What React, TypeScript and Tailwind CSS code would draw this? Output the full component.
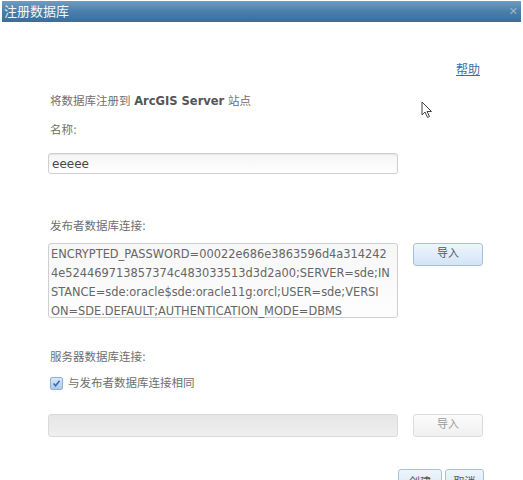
const font = "font-['DejaVu_Sans','Noto_Sans_CJK_SC',sans-serif]";

function ImportButton({ disabled }: { disabled?: boolean }) {
  return (
    <button
      className={
        disabled
          ? "h-[23px] w-[70px] rounded-[3px] border border-[#dcdcdc] bg-gradient-to-b from-[#fbfbfb] to-[#f0f0f0] text-[11px] text-[#9a9a9a]"
          : "h-[23px] w-[70px] rounded-[3px] border border-[#a7c1db] bg-gradient-to-b from-[#eef5fd] to-[#d3e4f7] text-[11px] text-[#555]"
      }
    >
      导入
    </button>
  );
}

export default function App() {
  return (
    <div className={`relative h-[480px] w-[523px] overflow-hidden bg-white ${font}`}>
      {/* title bar */}
      <div className="mx-[2px] mt-[1px] flex h-[21px] items-center justify-between bg-gradient-to-b from-[#6f9cc2] via-[#4a7fab] to-[#3d6d97] pl-[2px] pr-[3px]">
        <span className="text-[13px] leading-none text-[#f4f8fb]">注册数据库</span>
        <span className="text-[11px] leading-none text-[#9fb6cb]">✕</span>
      </div>

      <div className="flex flex-col pl-[48px]">
        <div className="mt-[40px] flex justify-end pr-[43px]">
          <a className="text-[12px] leading-4 text-[#3b6ea5] underline">帮助</a>
        </div>

        <p className="mt-[15px] pl-[2px] text-[11.5px] leading-4 text-[#6e6e6e]">
          将数据库注册到 <span className="font-bold text-[#555]">ArcGIS Server</span> 站点
        </p>

        <p className="mt-[13px] pl-[2px] text-[11.5px] leading-4 text-[#6e6e6e]">名称:</p>

        <div className="mt-[15px] flex h-[21px] w-[350px] items-center rounded-[3px] border border-[#cfcfcf] bg-gradient-to-b from-[#f4f4f4] to-white pl-[3px] text-[12px] text-[#484848] shadow-[inset_0_1px_1px_rgba(0,0,0,0.06)]">
          eeeee
        </div>

        <p className="mt-[44px] pl-[2px] text-[11.5px] leading-4 text-[#6e6e6e]">发布者数据库连接:</p>

        <div className="mt-[9px] flex items-start gap-[15px]">
          <div className="h-[75px] w-[350px] rounded-[3px] border border-[#cfcfcf] bg-gradient-to-b from-[#f7f7f7] to-[#fdfdfd] px-[2px] pt-[1px] text-[11.4px] leading-[19px] whitespace-pre text-[#666]">
            <div>ENCRYPTED_PASSWORD=00022e686e3863596d4a314242</div>
            <div>4e524469713857374c483033513d3d2a00;SERVER=sde;IN</div>
            <div>STANCE=sde:oracle$sde:oracle11g:orcl;USER=sde;VERSI</div>
            <div>ON=SDE.DEFAULT;AUTHENTICATION_MODE=DBMS</div>
          </div>
          <ImportButton />
        </div>

        <p className="mt-[31px] pl-[2px] text-[11.5px] leading-4 text-[#6e6e6e]">服务器数据库连接:</p>

        <div className="mt-[10px] flex items-center gap-[5px] pl-[2px]">
          <span className="flex h-[13px] w-[13px] items-center justify-center rounded-[2px] border border-[#8fb2d4] bg-gradient-to-b from-[#dbe9f7] to-[#a9c9e8]">
            <svg width="9" height="9" viewBox="0 0 9 9">
              <path d="M1.5 4.5 L3.6 6.8 L7.6 1.8" fill="none" stroke="#3a6fa6" strokeWidth="1.6" />
            </svg>
          </span>
          <span className="text-[11.5px] leading-4 text-[#6e6e6e]">与发布者数据库连接相同</span>
        </div>

        <div className="mt-[23px] flex items-center gap-[15px]">
          <div className="h-[23px] w-[350px] rounded-[3px] border border-[#dadada] bg-gradient-to-b from-[#e6e6e6] to-[#efefef]" />
          <ImportButton disabled />
        </div>

        <div className="mt-[32px] flex items-start gap-[3px] pl-[350px]">
          <button className="h-[26px] w-[44px] rounded-[3px] border border-[#a7c1db] bg-gradient-to-b from-[#eef5fd] to-[#d3e4f7] text-[11px] leading-none text-[#555]">
            创建
          </button>
          <button className="h-[26px] w-[39px] rounded-[3px] border border-[#a7c1db] bg-gradient-to-b from-[#eef5fd] to-[#d3e4f7] text-[11px] leading-none text-[#555]">
            取消
          </button>
        </div>
      </div>

      {/* mouse pointer */}
      <svg className="absolute left-[421px] top-[101px]" width="12" height="18" viewBox="0 0 12 18">
        <path d="M1 1 L1 14 L4 11 L6.5 16.5 L8.5 15.5 L6 10.5 L10.5 10.5 Z" fill="white" stroke="#444" strokeWidth="1" />
      </svg>
    </div>
  );
}
